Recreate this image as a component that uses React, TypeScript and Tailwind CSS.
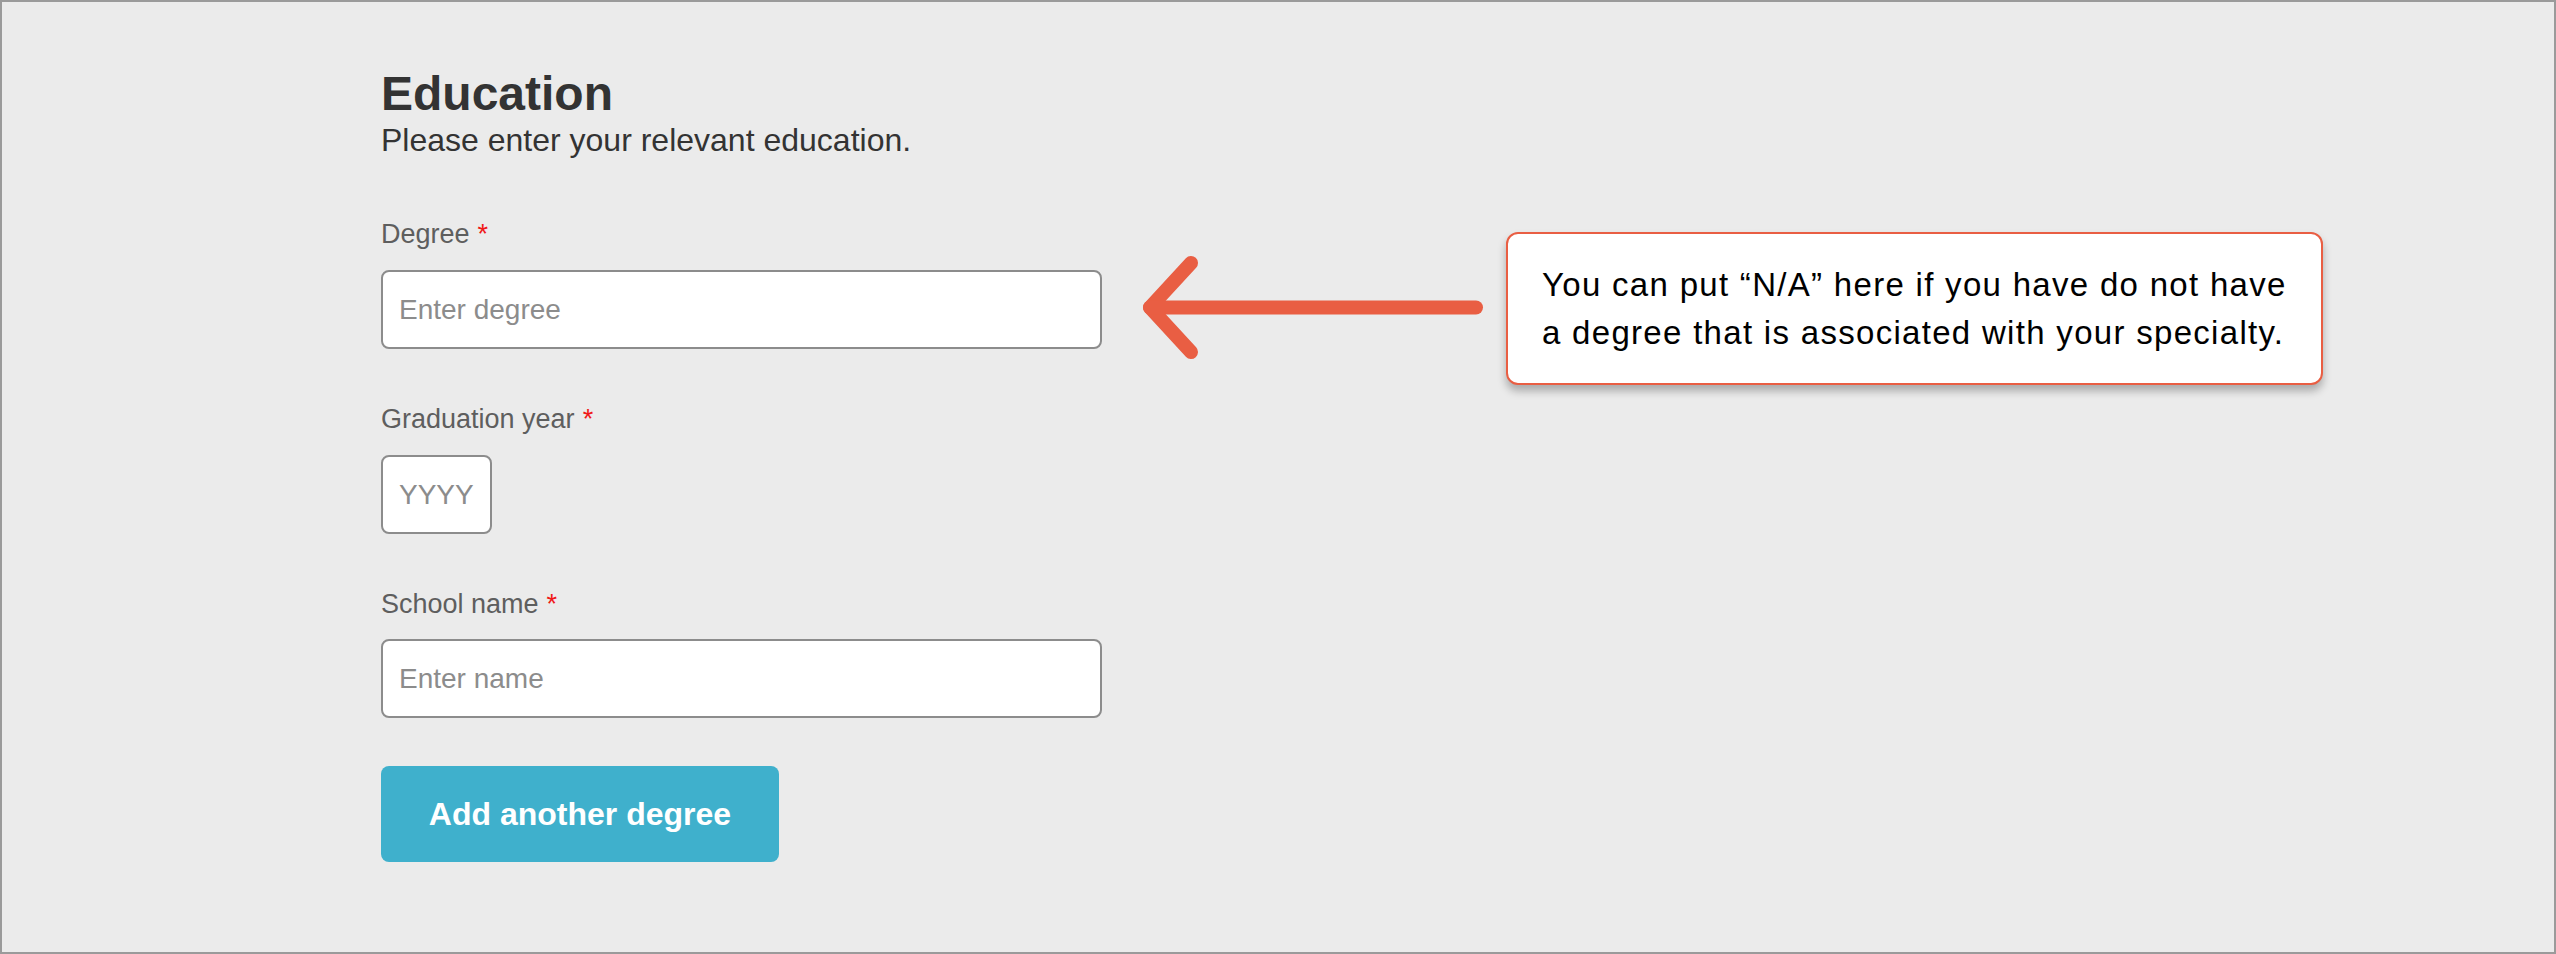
import React from "react";

const font = "font-['Liberation_Sans',Arial,Helvetica,sans-serif]";

const FieldLabel = ({ label, className = "" }: { label: string; className?: string }) => (
  <label className={`block text-[27px] leading-[32px] text-[#5e5e5e] ${className}`}>
    {label}
    <span className="ml-[8px] text-[#f01818]">*</span>
  </label>
);

const TextInput = ({ placeholder, className = "" }: { placeholder: string; className?: string }) => (
  <input
    type="text"
    placeholder={placeholder}
    className={`block h-[79px] rounded-[8px] border-2 border-[#8c8c8c] bg-white pl-[16px] text-[28px] text-[#333] outline-none placeholder:text-[#8c8c8c] ${className}`}
  />
);

const Arrow = () => (
  <svg width="378" height="122" viewBox="0 0 378 122" className="mt-[15px] ml-[26px] shrink-0">
    <polyline
      points="63,16 22,60.5 63,105"
      fill="none"
      stroke="#e95e43"
      strokeWidth="14"
      strokeLinecap="round"
      strokeLinejoin="round"
    />
    <line x1="22" y1="60.5" x2="348" y2="60.5" stroke="#e95e43" strokeWidth="14" strokeLinecap="round" />
  </svg>
);

export default function App() {
  return (
    <div className={`h-[954px] w-full border-2 border-[#9a9a9a] bg-[#ebebeb] ${font}`}>
      <div className="flex items-start pl-[379px] pt-[64px]">
        {/* Form */}
        <div className="w-[721px] shrink-0">
          <h2 className="text-[48px] font-bold leading-[56px] text-[#333]">Education</h2>
          <p className="text-[32px] leading-[36px] text-[#333]">Please enter your relevant education.</p>

          <FieldLabel label="Degree" className="mt-[60px]" />
          <TextInput placeholder="Enter degree" className="mt-[20px] w-[721px]" />

          <FieldLabel label="Graduation year" className="mt-[54px]" />
          <TextInput placeholder="YYYY" className="mt-[20px] h-[78px] w-[111px]" />

          <FieldLabel label="School name" className="mt-[54px]" />
          <TextInput placeholder="Enter name" className="mt-[19px] w-[721px]" />

          <button className="mt-[48px] h-[96px] w-[398px] rounded-[8px] bg-[#3fb0cc] text-[32px] font-bold text-white">
            Add another degree
          </button>
        </div>

        {/* Annotation */}
        <div className="mt-[166px] flex items-start">
          <Arrow />
          <div className="flex h-[153px] w-[817px] shrink-0 items-center rounded-[12px] border-2 border-[#e95e43] bg-white pl-[34px] shadow-[0_6px_8px_rgba(0,0,0,0.28)]">
            <p className="whitespace-nowrap text-[33px] leading-[48px] tracking-[1.3px] text-black">
              You can put “N/A” here if you have do not have
              <br />
              a degree that is associated with your specialty.
            </p>
          </div>
        </div>
      </div>
    </div>
  );
}
